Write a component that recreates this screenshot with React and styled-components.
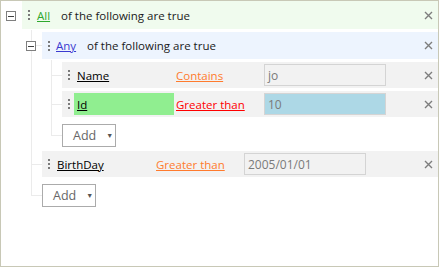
import React from 'react'
import styled, { createGlobalStyle } from 'styled-components'

const GlobalStyle = createGlobalStyle`
  html, body {
    margin: 0;
    padding: 0;
    background: #ffffff;
  }
  body {
    font-family: "Open Sans", "Noto Sans", sans-serif;
    font-size: 11.5px;
    color: #1a1a1a;
  }
`

const StyledFrame = styled.div`
  box-sizing: border-box;
  width: 439px;
  height: 267px;
  border: 1px solid #c8c8b6;
  overflow: hidden;
`

const StyledGroup = styled.div`
  display: flex;
  flex-direction: column;
`

const StyledHeaderLine = styled.div`
  display: flex;
  padding-bottom: 3px;
`

const StyledExpandCol = styled.div`
  width: ${(p) => p.$width}px;
  flex: none;
  position: relative;
`

const StyledExpandBox = styled.div`
  position: absolute;
  left: ${(p) => p.$left}px;
  top: ${(p) => p.$top}px;
  box-sizing: border-box;
  width: 10px;
  height: 10px;
  border: 1px solid #7f7f7f;
  background: #ffffff;
  display: flex;
  align-items: center;
  justify-content: center;
  &::after {
    content: '';
    width: 6px;
    height: 1px;
    background: #404040;
  }
`

const StyledRow = styled.div`
  flex: 1;
  height: ${(p) => p.$height}px;
  display: flex;
  align-items: center;
  background: ${(p) => p.$bg};
`

const StyledHandle = styled.div`
  width: 12px;
  flex: none;
  padding-left: 6px;
  box-sizing: border-box;
  display: flex;
  align-items: center;
`

const StyledConjunction = styled.span`
  margin-left: ${(p) => p.$offset}px;
  color: ${(p) => p.$color};
  text-decoration: underline;
  margin-right: 11px;
`

const StyledChildren = styled.div`
  position: relative;
  margin-left: ${(p) => p.$indent}px;
  &::before {
    content: '';
    position: absolute;
    left: 9px;
    top: -2px;
    bottom: 16px;
    width: 1px;
    background: #ebebeb;
  }
`

const StyledItem = styled.div`
  position: relative;
  padding-left: ${(p) => (p.$group ? 0 : 20)}px;
  padding-bottom: ${(p) => (p.$group ? 0 : 3)}px;
  &::before {
    content: '';
    position: absolute;
    left: 9px;
    top: 13px;
    width: 11px;
    height: 1px;
    background: #ebebeb;
  }
`

const StyledAddItem = styled(StyledItem)`
  padding-top: 4px;
  padding-bottom: 4px;
  &::before {
    top: 15px;
  }
`

const StyledAdd = styled.div`
  box-sizing: border-box;
  width: 54px;
  height: 23px;
  border: 1px solid #ababab;
  background: #ffffff;
  display: flex;
  align-items: center;
  padding-left: 10px;
  color: #666666;
  font-size: 12.5px;
`

const StyledCaret = styled.span`
  margin-left: 10px;
  font-size: 7px;
  color: #555555;
`

const StyledField = styled.div`
  box-sizing: border-box;
  width: 100px;
  height: 22px;
  flex: none;
  display: flex;
  align-items: center;
  padding-left: 3px;
  background: ${(p) => p.$bg || 'transparent'};
  & > span {
    text-decoration: underline;
    color: #000000;
  }
`

const StyledOperator = styled.div`
  width: 88px;
  flex: none;
  margin-left: 2px;
  & > span {
    color: ${(p) => p.$color};
    text-decoration: underline;
  }
`

const StyledValue = styled.div`
  box-sizing: border-box;
  width: 122px;
  height: 22px;
  flex: none;
  border: 1px solid #d4d4d4;
  background: ${(p) => p.$bg || 'transparent'};
  display: flex;
  align-items: center;
  padding-left: 3px;
  color: #7a7a7a;
  font-size: 12px;
`

const StyledClose = styled.div`
  margin-left: auto;
  margin-right: 5px;
  width: 10px;
  display: flex;
  align-items: center;
  justify-content: center;
`

function Handle() {
  return (
    <StyledHandle>
      <svg width="2" height="10" viewBox="0 0 2 10">
        <rect x="0" y="0" width="2" height="2" fill="#7a7a7a" />
        <rect x="0" y="4" width="2" height="2" fill="#7a7a7a" />
        <rect x="0" y="8" width="2" height="2" fill="#7a7a7a" />
      </svg>
    </StyledHandle>
  )
}

function Close() {
  return (
    <StyledClose>
      <svg width="9" height="9" viewBox="0 0 9 9">
        <path d="M1 1 L8 8 M8 1 L1 8" stroke="#7d7d7d" strokeWidth="1.4" />
      </svg>
    </StyledClose>
  )
}

function Rule({ field, fieldBg, op, opColor, value, valueBg }) {
  return (
    <StyledItem>
      <StyledRow $bg="#f2f2f2" $height={26}>
        <Handle />
        <StyledField $bg={fieldBg}>
          <span>{field}</span>
        </StyledField>
        <StyledOperator $color={opColor}>
          <span>{op}</span>
        </StyledOperator>
        <StyledValue $bg={valueBg}>{value}</StyledValue>
        <Close />
      </StyledRow>
    </StyledItem>
  )
}

function AddButton() {
  return (
    <StyledAddItem>
      <StyledAdd>
        Add<StyledCaret>▼</StyledCaret>
      </StyledAdd>
    </StyledAddItem>
  )
}

function GroupHeader({ colWidth, boxLeft, boxTop, height, bg, word, wordColor, offset }) {
  return (
    <StyledHeaderLine>
      <StyledExpandCol $width={colWidth}>
        <StyledExpandBox $left={boxLeft} $top={boxTop} />
      </StyledExpandCol>
      <StyledRow $bg={bg} $height={height}>
        <Handle />
        <StyledConjunction $color={wordColor} $offset={offset}>
          {word}
        </StyledConjunction>
        <span>of the following are true</span>
        <Close />
      </StyledRow>
    </StyledHeaderLine>
  )
}

export default function App() {
  return (
    <>
      <GlobalStyle />
      <StyledFrame>
        <StyledGroup>
          <GroupHeader colWidth={21} boxLeft={5} boxTop={10} height={28} bg="#f0fbee" word="All" wordColor="#2ea82e" offset={3} />
          <StyledChildren $indent={21}>
            <StyledItem $group>
              <StyledGroup>
                <GroupHeader colWidth={20} boxLeft={4} boxTop={9} height={27} bg="#edf4fe" word="Any" wordColor="#3a3ad0" offset={2} />
                <StyledChildren $indent={20}>
                  <Rule field="Name" op="Contains" opColor="#ff7b2e" value="jo" />
                  <Rule field="Id" fieldBg="#90ee90" op="Greater than" opColor="#ff0000" value="10" valueBg="#add8e6" />
                  <AddButton />
                </StyledChildren>
              </StyledGroup>
            </StyledItem>
            <Rule field="BirthDay" op="Greater than" opColor="#ff7b2e" value="2005/01/01" />
            <AddButton />
          </StyledChildren>
        </StyledGroup>
      </StyledFrame>
    </>
  )
}
